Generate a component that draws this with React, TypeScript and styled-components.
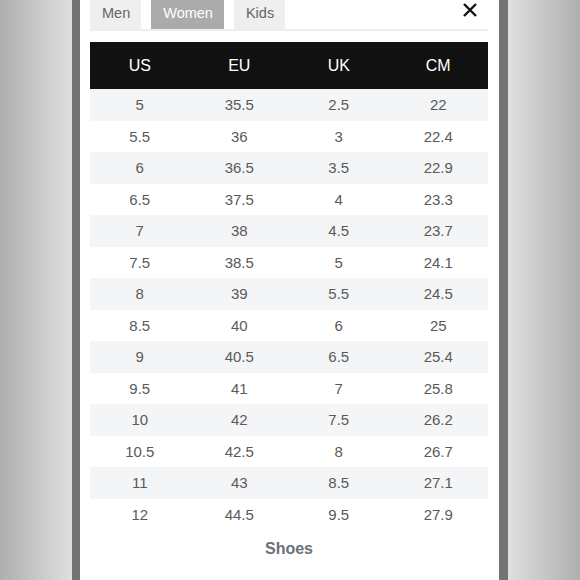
import React from 'react';
import { styled, createGlobalStyle } from 'styled-components';

const GlobalStyle = createGlobalStyle`
  html, body {
    margin: 0;
    padding: 0;
    height: 100%;
  }
  body {
    font-family: 'Liberation Sans', Arial, sans-serif;
    background: linear-gradient(90deg, #afafaf 0%, #dfdfdf 12.4%, #dfdfdf 87.6%, #afafaf 100%);
    overflow: hidden;
  }
`;

const Page = styled.div`
  display: flex;
  justify-content: center;
  height: 580px;
  padding-left: 72px;
  padding-right: 72px;
  box-sizing: border-box;
`;

const Frame = styled.section`
  width: 436px;
  box-sizing: border-box;
  border-left: 8px solid #737373;
  border-right: 9px solid #737373;
  background: #fff;
  padding: 0 11px 0 10px;
  display: flex;
  flex-direction: column;
`;

const TabBar = styled.nav`
  display: flex;
  align-items: flex-start;
  gap: 10px;
  height: 29px;
  border-bottom: 2px solid #eeeeee;
`;

const Tab = styled.button<{ $active?: boolean }>`
  all: unset;
  display: flex;
  align-items: center;
  height: 29px;
  padding: 0 11px 4px 12px;
  box-sizing: border-box;
  font-size: 14.5px;
  cursor: pointer;
  background: ${({ $active }) => ($active ? '#ababab' : '#efefef')};
  color: ${({ $active }) => ($active ? '#ffffff' : '#666666')};
`;

const CloseBtn = styled.button`
  all: unset;
  margin-left: auto;
  margin-right: 11px;
  margin-top: 3px;
  width: 14px;
  height: 14px;
  cursor: pointer;
  display: block;
`;

const Table = styled.table`
  margin-top: 11px;
  width: 100%;
  border-collapse: collapse;
  table-layout: fixed;
`;

const HeadRow = styled.tr`
  height: 47px;
  background: #111111;
`;

const HeadCell = styled.th`
  color: #ffffff;
  font-weight: 400;
  font-size: 16px;
  text-align: center;
  padding: 0;
`;

const Row = styled.tr<{ $striped: boolean }>`
  height: 31.5px;
  background: ${({ $striped }) => ($striped ? '#f4f5f7' : '#ffffff')};
`;

const Cell = styled.td`
  color: #5a5a5a;
  font-size: 15px;
  text-align: center;
  padding: 0;
`;

const Caption = styled.p`
  margin: 10px 0 0;
  text-align: center;
  font-size: 16px;
  font-weight: 700;
  color: #6b7079;
`;

const sizes: [string, string, string, string][] = [
  ['5', '35.5', '2.5', '22'],
  ['5.5', '36', '3', '22.4'],
  ['6', '36.5', '3.5', '22.9'],
  ['6.5', '37.5', '4', '23.3'],
  ['7', '38', '4.5', '23.7'],
  ['7.5', '38.5', '5', '24.1'],
  ['8', '39', '5.5', '24.5'],
  ['8.5', '40', '6', '25'],
  ['9', '40.5', '6.5', '25.4'],
  ['9.5', '41', '7', '25.8'],
  ['10', '42', '7.5', '26.2'],
  ['10.5', '42.5', '8', '26.7'],
  ['11', '43', '8.5', '27.1'],
  ['12', '44.5', '9.5', '27.9'],
];

const App = () => {
  return (
    <>
      <GlobalStyle />
      <Page>
        <Frame>
          <TabBar>
            <Tab>Men</Tab>
            <Tab $active>Women</Tab>
            <Tab>Kids</Tab>
            <CloseBtn aria-label="Close">
              <svg width="14" height="14" viewBox="0 0 14 14">
                <path d="M1 1 L13 13 M13 1 L1 13" stroke="#111" strokeWidth="2.4" strokeLinecap="butt" />
              </svg>
            </CloseBtn>
          </TabBar>

          <Table>
            <thead>
              <HeadRow>
                <HeadCell>US</HeadCell>
                <HeadCell>EU</HeadCell>
                <HeadCell>UK</HeadCell>
                <HeadCell>CM</HeadCell>
              </HeadRow>
            </thead>
            <tbody>
              {sizes.map((row, i) => (
                <Row key={row[0]} $striped={i % 2 === 0}>
                  {row.map((v, j) => (
                    <Cell key={j}>{v}</Cell>
                  ))}
                </Row>
              ))}
            </tbody>
          </Table>

          <Caption>Shoes</Caption>
        </Frame>
      </Page>
    </>
  );
};

export default App;
